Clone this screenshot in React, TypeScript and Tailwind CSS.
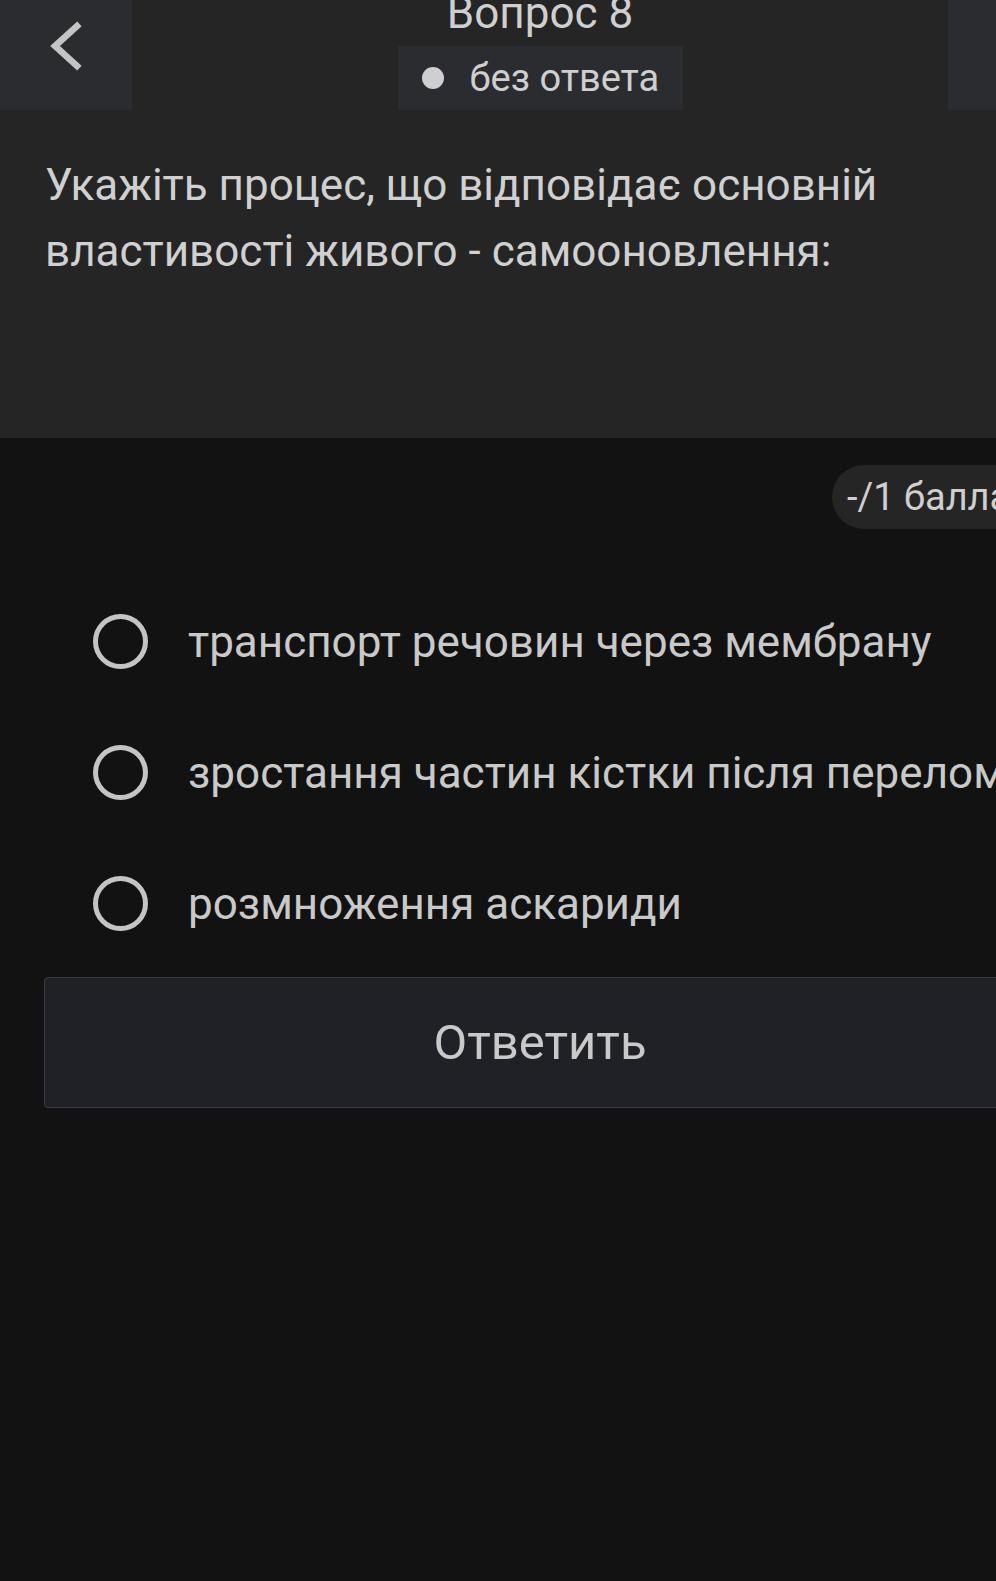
import React from "react";

const font = { fontFamily: "Roboto, 'Noto Sans', sans-serif" };

function Radio({ label }: { label: string }) {
  return (
    <div className="flex items-center h-[131px] pl-[93px]">
      <div className="w-[55px] h-[55px] rounded-full border-[5px] border-[#c4c4c4] shrink-0" />
      <span className="ml-[40px] text-[44px] text-[#c9c9c9] whitespace-nowrap leading-none">{label}</span>
    </div>
  );
}

export default function App() {
  return (
    <div className="w-[996px] h-[1581px] overflow-hidden bg-[#121212]" style={font}>
      <div className="w-[1080px]">
        <div className="bg-[#252525]">
          <div className="flex h-[110px]">
            <div className="w-[132px] bg-[#2b2c30] flex items-start">
              <svg width="40" height="50" viewBox="0 0 40 50" className="ml-[46px] mt-[21px]">
                <path d="M31 5 L9 25 L31 45" fill="none" stroke="#c4c4c4" strokeWidth="6.5" strokeLinecap="square" />
              </svg>
            </div>
            <div className="flex-1 flex flex-col items-center">
              <div className="text-[44px] leading-none text-[#cfcfcf] -mt-[9px] h-[55px]">Вопрос 8</div>
              <div className="bg-[#2b2c30] h-[64px] w-[285px] flex items-center pl-[24px]">
                <span className="w-[22px] h-[22px] rounded-full bg-[#cfcfcf]" />
                <span className="ml-[26px] text-[38px] text-[#cfcfcf] leading-none">без ответа</span>
              </div>
            </div>
            <div className="w-[132px] bg-[#2b2c30]" />
          </div>
          <div className="h-[328px] pl-[45px] pt-[42px] text-[44px] leading-[66px] text-[#d0d0d0]">
            <p>Укажіть процес, що відповідає основній</p>
            <p>властивості живого - самооновлення:</p>
          </div>
        </div>
        <div className="flex justify-end pt-[27px]">
          <div className="w-[248px] h-[64px] rounded-l-full bg-[#252525] flex items-center pl-[15px] text-[38px] text-[#cfcfcf] leading-none whitespace-nowrap">
            -/1 балла
          </div>
        </div>
        <div className="mt-[47px]">
          <Radio label="транспорт речовин через мембрану" />
          <Radio label="зростання частин кістки після перелому" />
          <Radio label="розмноження аскариди" />
        </div>
        <div className="mx-[44px] mt-[8px] h-[131px] rounded-[4px] border border-[#3a3b3f] bg-[#202126] flex items-center justify-center">
          <span className="text-[49px] text-[#c9c9c9] leading-none">Ответить</span>
        </div>
      </div>
    </div>
  );
}
